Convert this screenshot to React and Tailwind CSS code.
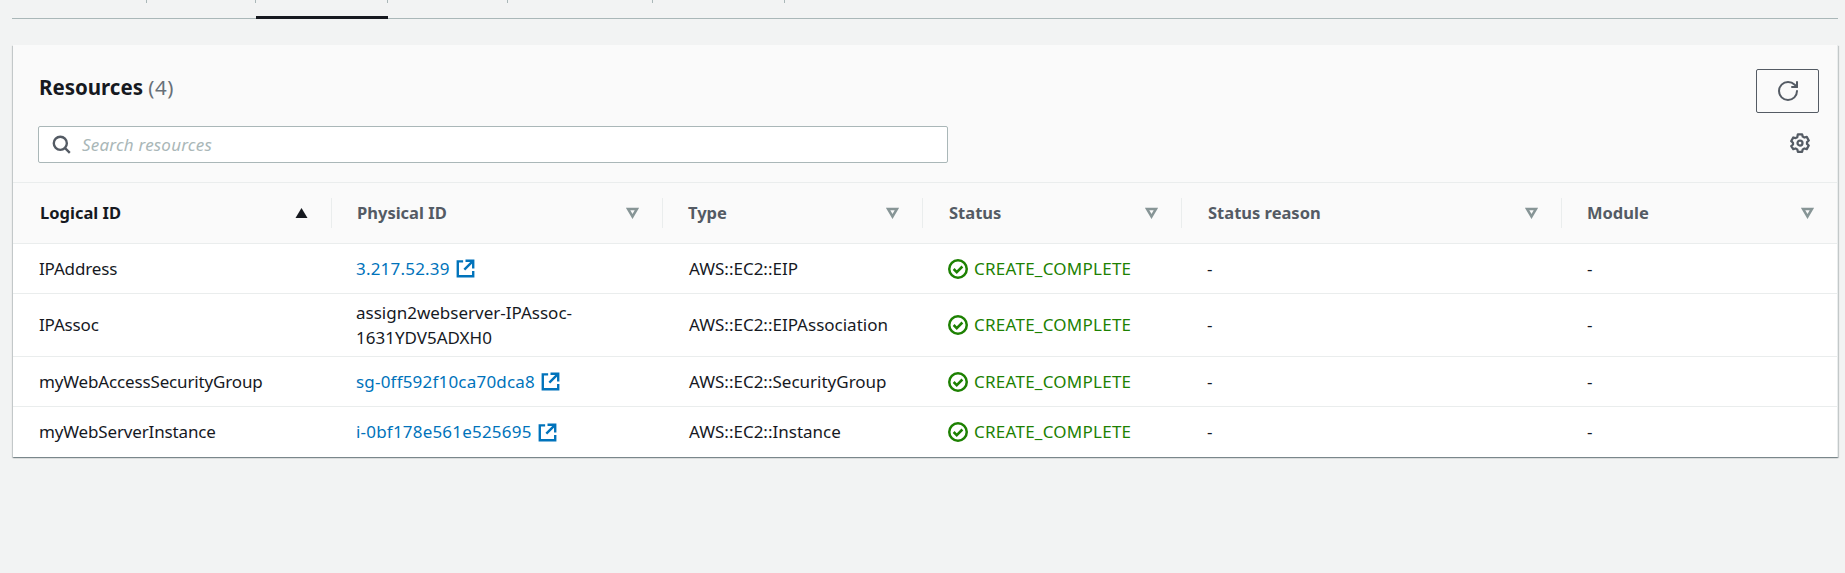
import { RotateCw } from "lucide-react";

const font = "font-['Noto_Sans','Liberation_Sans',sans-serif]";
const columns = "grid grid-cols-[319px_331px_260px_259px_380px_276px]";

const tabWidths = [135, 109, 132, 120, 145, 132];

const resources = [
    { id: "IPAddress", physical: "3.217.52.39", link: true, type: "AWS::EC2::EIP" },
    { id: "IPAssoc", physical: "assign2webserver-IPAssoc-1631YDV5ADXH0", link: false, type: "AWS::EC2::EIPAssociation" },
    { id: "myWebAccessSecurityGroup", physical: "sg-0ff592f10ca70dca8", link: true, type: "AWS::EC2::SecurityGroup" },
    { id: "myWebServerInstance", physical: "i-0bf178e561e525695", link: true, type: "AWS::EC2::Instance" },
];

const headers = ["Logical ID", "Physical ID", "Type", "Status", "Status reason", "Module"];

const ExternalIcon = () => (
    <svg viewBox="0 0 16 16" className="w-[19px] h-[19px] ml-[6px] shrink-0 text-[#0073bb]" fill="none" stroke="currentColor" strokeWidth="2">
        <path d="M14.5 8V1.5H8" />
        <path d="M14 2L7 9" />
        <path d="M6 2H1.5v12.5h13V10" />
    </svg>
);

const StatusIcon = () => (
    <svg viewBox="0 0 16 16" className="w-[20px] h-[20px] shrink-0 text-[#1d8102]" fill="none" stroke="currentColor" strokeWidth="2">
        <circle cx="8" cy="8" r="7" />
        <path d="M4.5 8l2.5 2.5L11.5 6" />
    </svg>
);

const SearchIcon = () => (
    <svg viewBox="0 0 16 16" className="w-[19px] h-[19px] shrink-0 text-[#545b64]" fill="none" stroke="currentColor" strokeWidth="2">
        <circle cx="7" cy="7" r="5.5" />
        <path d="M11 11l4 4" />
    </svg>
);

const GearIcon = () => (
    <svg viewBox="0 0 16 16" className="w-[20px] h-[20px] text-[#545b64]" fill="none" stroke="currentColor" strokeWidth="1.8" strokeLinejoin="round">
        <path d="M6.3 1h3.4l.5 1.9 1.3.7 1.9-.5 1.6 2.9-1.4 1.3v1.4l1.4 1.3-1.6 2.9-1.9-.5-1.3.7-.5 1.9H6.3l-.5-1.9-1.3-.7-1.9.5L1 10.5l1.4-1.3V7.8L1 6.5 2.6 3.6l1.9.5 1.3-.7z" />
        <circle cx="8" cy="8" r="2" />
    </svg>
);

const SortIcon = ({ active }) =>
    active ? (
        <svg viewBox="0 0 12 12" className="w-[13px] h-[12px] text-[#16191f]" fill="currentColor">
            <path d="M6 1l6 10H0z" />
        </svg>
    ) : (
        <svg viewBox="0 0 12 12" className="w-[13px] h-[12px] text-[#879596]" fill="none" stroke="currentColor" strokeWidth="2.5">
            <path d="M1.5 2h9L6 9.5z" />
        </svg>
    );

export default function App() {
    return (
        <div className={`${font} min-h-[573px] bg-[#f2f3f3] text-[17px] text-[#16191f] pl-[12px] pr-[7px]`}>
            <div className="flex h-[19px] border-b border-[#aab7b8]">
                {tabWidths.map((w, i) => (
                    <div
                        key={i}
                        style={{ width: w }}
                        className={`relative ${i === 2 ? "-mb-px border-b-[3px] border-[#16191f]" : ""}`}
                    >
                        <div className="absolute right-0 top-0 h-[3px] w-px bg-[#aab7b8]" />
                    </div>
                ))}
            </div>

            <div className="ml-px mt-[26px] bg-white border-r border-[#eaeded] shadow-[0_1px_1px_0_rgba(0,28,36,0.3),1px_1px_1px_0_rgba(0,28,36,0.15),-1px_1px_1px_0_rgba(0,28,36,0.15)]">
                <div className="bg-[#fafafa] border-b border-[#eaeded]">
                    <div className="h-[137px] flex justify-between pl-[25px] pr-[18px]">
                        <div className="flex-1">
                            <h2 className="ml-px mt-[29px] text-[20.5px] leading-[27px] font-bold">
                                Resources <span className="font-normal tracking-[0.5px] text-[#687078]">(4)</span>
                            </h2>
                            <div className="mt-[25px] w-[910px] h-[37px] flex items-center bg-white border border-[#aab7b8] rounded-[2px] pl-[13px]">
                                <SearchIcon />
                                <span className="ml-[11px] italic tracking-[0.2px] text-[#aab7b8]">Search resources</span>
                            </div>
                        </div>
                        <div className="flex flex-col items-end">
                            <button className="mt-[24px] w-[63px] h-[44px] flex items-center justify-center border border-[#545b64] rounded-[2px]">
                                <RotateCw size={24} strokeWidth={2} className="text-[#545b64]" />
                            </button>
                            <div className="mt-[20px] mr-[9px]">
                                <GearIcon />
                            </div>
                        </div>
                    </div>
                </div>

                <div className={`${columns} h-[61px] bg-[#fafafa] border-b border-[#eaeded] text-[16.5px] font-bold`}>
                    {headers.map((h, i) => (
                        <div key={h} className={`flex items-center h-full ${i === 0 ? "pl-[27px]" : i === 3 || i === 4 ? "pl-[26px]" : "pl-[25px]"}`}>
                            <span className={`flex-1 ${i === 0 ? "" : "text-[#545b64]"}`}>{h}</span>
                            <SortIcon active={i === 0} />
                            <div className={`ml-[23px] h-[30px] w-px ${i < 5 ? "bg-[#eaeded]" : ""}`} />
                        </div>
                    ))}
                </div>

                {resources.map((r, i) => (
                    <div key={r.id} className={`${columns} items-center ${r.link ? "h-[50px]" : "h-[63px]"} ${i < 3 ? "border-b border-[#eaeded]" : ""}`}>
                        <div className="pl-[26px] tracking-[-0.15px]">{r.id}</div>
                        <div className="pl-[24px] pr-[30px]">
                            {r.link ? (
                                <span className="flex items-center tracking-[0.2px] text-[#0073bb]">
                                    {r.physical}
                                    <ExternalIcon />
                                </span>
                            ) : (
                                <span className="block leading-[25px]">{r.physical}</span>
                            )}
                        </div>
                        <div className="pl-[26px]">{r.type}</div>
                        <div className="pl-[25px] flex items-center text-[#1d8102]">
                            <StatusIcon />
                            <span className="ml-[6px] tracking-[0.25px]">CREATE_COMPLETE</span>
                        </div>
                        <div className="pl-[25px]">-</div>
                        <div className="pl-[25px]">-</div>
                    </div>
                ))}
            </div>
        </div>
    );
}
